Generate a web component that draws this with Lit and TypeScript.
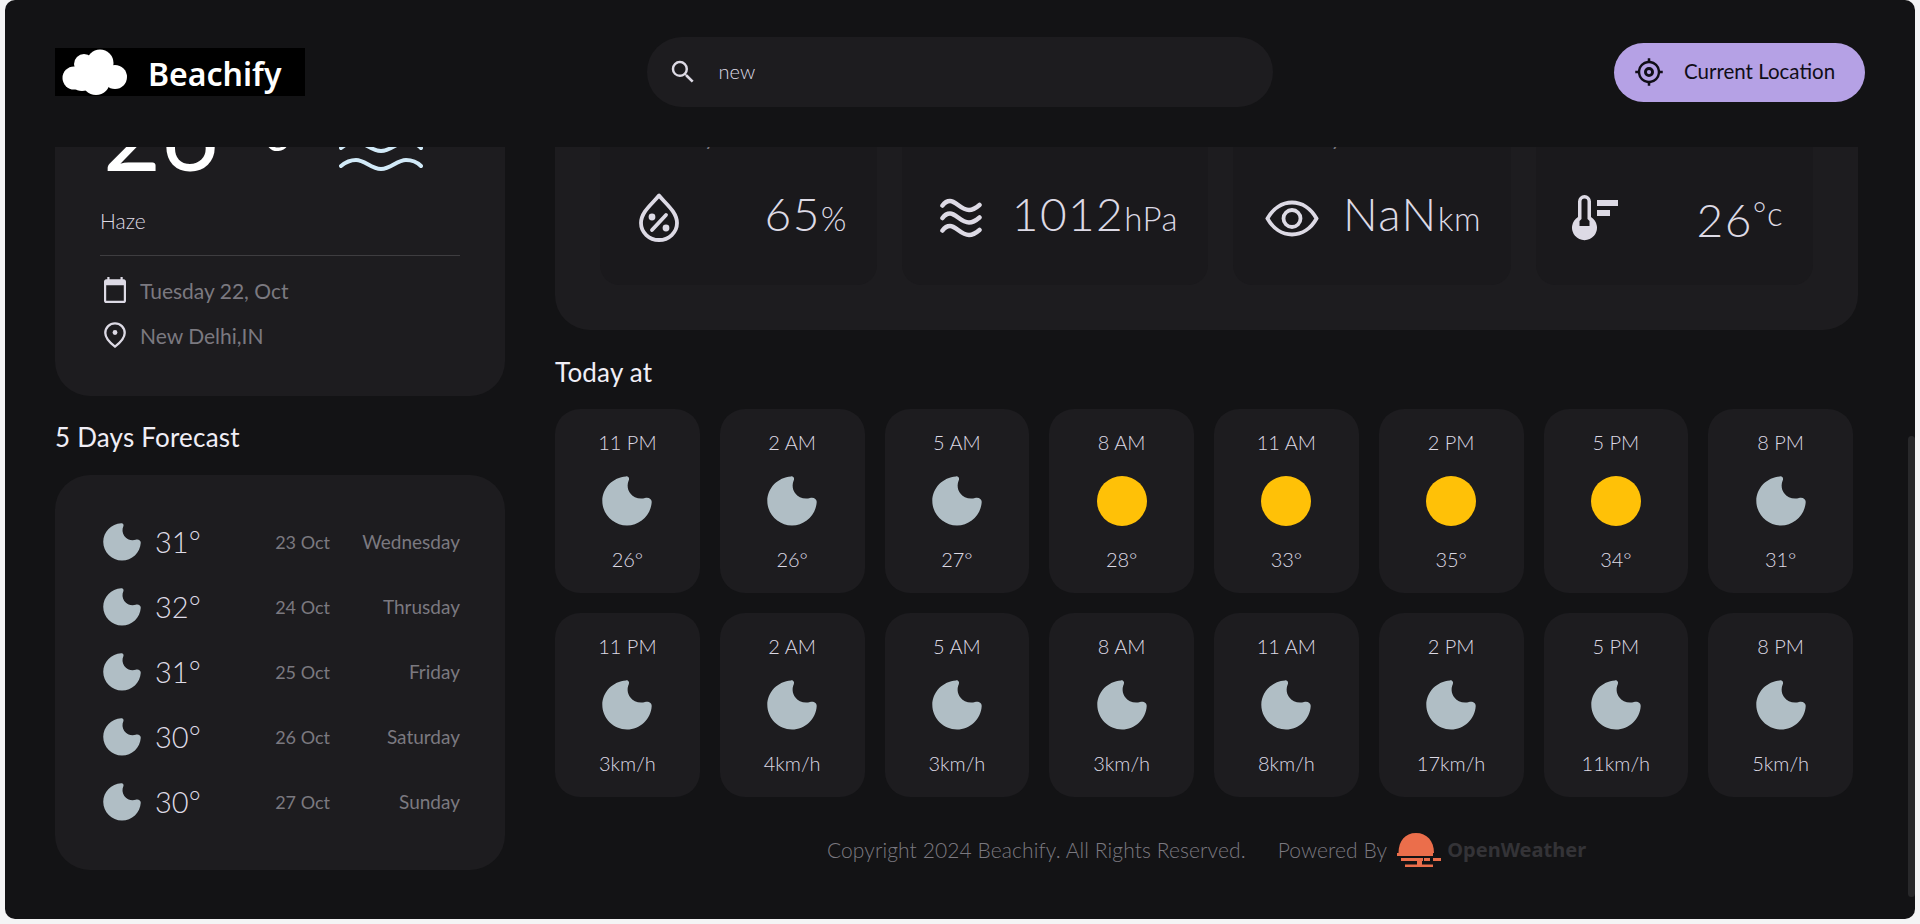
import { LitElement, html, css, svg } from "lit";
import { customElement } from "lit/decorators.js";

const moonIcon = (size: number) => html`<svg class="wx" width=${size} height=${size} viewBox="0 0 50 50" aria-hidden="true"><path fill="#b0bec5" d="M24 .4C26 0 27.8 2 26.8 4.2 25 7.8 25.2 13 28 17c3.4 4.9 9.8 6.6 15 5 3.6-1.1 6.9 1 6.7 4C49 39 38 49.5 25 49.5 11.5 49.5.3 38.3.3 24.8.3 11.8 11 1.2 24 .4z"/></svg>`;
const sunIcon = (size: number) => html`<svg class="wx" width=${size} height=${size} viewBox="0 0 50 50" aria-hidden="true"><circle cx="25" cy="25" r="25" fill="#ffc107"/></svg>`;

const forecast = [
  ["31", "23 Oct", "Wednesday"],
  ["32", "24 Oct", "Thrusday"],
  ["31", "25 Oct", "Friday"],
  ["30", "26 Oct", "Saturday"],
  ["30", "27 Oct", "Sunday"],
];
const times = ["11 PM", "2 AM", "5 AM", "8 AM", "11 AM", "2 PM", "5 PM", "8 PM"];
const temps = [["26°", 0], ["26°", 0], ["27°", 0], ["28°", 1], ["33°", 1], ["35°", 1], ["34°", 1], ["31°", 0]] as [string, number][];
const winds = ["3km/h", "4km/h", "3km/h", "3km/h", "8km/h", "17km/h", "11km/h", "5km/h"];

const dropIcon = svg`<path d="M20 2.500C13 11 2 19 2 30a18 17 0 0 0 36 0C38 19 27 11 20 2.500z" fill="none" stroke="currentColor" stroke-width="3.800" stroke-linejoin="round"/><circle cx="13" cy="24" r="3.400" fill="currentColor"/><circle cx="27" cy="35" r="3.400" fill="currentColor"/><path d="M13 37 27 22" stroke="currentColor" stroke-width="3.800" stroke-linecap="round"/>`;
const waveRow = (dy: number) => svg`<path transform="translate(0 ${dy})" d="M2.500 7.500C5 4 7 3 10 3 16 3 21 12 29 12 33 12 36 10 39.500 7"/>`;
const wavesIcon = svg`<g fill="none" stroke="currentColor" stroke-width="4.500" stroke-linecap="round">${waveRow(0)}${waveRow(12.5)}${waveRow(25)}</g>`;
const eyeIcon = svg`<path d="M2.500 18.500C8 8.500 17 2.500 27 2.500S46 8.500 51.500 18.500C46 28.500 37 34.500 27 34.500S8 28.500 2.500 18.500z" fill="none" stroke="currentColor" stroke-width="3.800"/><circle cx="27" cy="18.500" r="8.500" fill="none" stroke="currentColor" stroke-width="3.800"/>`;
const thermoIcon = svg`<path fill-rule="evenodd" fill="currentColor" d="M6 22V6.500a6.500 6.500 0 0 1 13 0V22a12.500 12.500 0 1 1-13 0zM9.500 6.500V24L7.500 26v5h10v-5L15.500 24V6.500a3 3 0 0 0-6 0z"/><path d="M25 5h21v6H25zM25 15h13v6H25z" fill="currentColor"/>`;

const highlights = [
  { label: "Humidity", icon: dropIcon, vb: "0 0 40 50", w: 40, h: 50, value: "65", unit: "%" },
  { label: "Pressure", icon: wavesIcon, vb: "0 0 42 40", w: 42, h: 40, value: "1012", unit: "hPa" },
  { label: "Visibility", icon: eyeIcon, vb: "0 0 54 37", w: 54, h: 37, value: "NaN", unit: "km" },
  { label: "Feels Like", icon: thermoIcon, vb: "0 0 46 46", w: 46, h: 46, value: "26", unit: "°c", sup: true },
];

@customElement("app-root")
export class AppRoot extends LitElement {
  static styles = css`
    :host {
      display: block;
      width: 1920px;
      height: 924px;
      background: #f4f4f5;
      overflow: hidden;
      font-family: "Lato", "Noto Sans", sans-serif;
      color: #dddae5;
    }
    * { box-sizing: border-box; }
    .panel {
      position: relative;
      width: 1910px;
      height: 919px;
      margin: 0 5px;
      background: #131315;
      border-radius: 10px;
      overflow: hidden;
      display: flex;
      flex-direction: column;
    }
    .header {
      flex: none;
      height: 147px;
      padding: 0 50px 3px;
      display: flex;
      align-items: center;
      justify-content: space-between;
    }
    .logo {
      width: 250px;
      height: 48px;
      background: #000;
      display: flex;
      align-items: center;
      padding-left: 7px;
      gap: 21px;
      color: #fff;
      font-family: "Noto Sans", sans-serif;
      font-weight: 600;
      font-size: 32px;
    }
    .logo span { margin-top: 2px; }
    .search {
      width: 626px;
      height: 70px;
      border-radius: 35px;
      background: #1d1c1f;
      display: flex;
      align-items: center;
      padding-left: 21px;
      gap: 21px;
      font-size: 20px;
      font-weight: 300;
      color: #dddae5;
    }
    .search svg { fill: #dddae5; }
    .search span, .locate span { margin-top: -2px; }
    .locate {
      width: 251px;
      height: 59px;
      border-radius: 30px;
      background: #b5a1e5;
      color: #100e17;
      display: flex;
      align-items: center;
      padding-left: 20px;
      gap: 20px;
      font-size: 20.500px;
      font-weight: 400;
    }
    .locate svg { fill: #100e17; }
    .body {
      flex: 1;
      min-height: 0;
      overflow: hidden;
    }
    .content {
      margin-top: -120px;
      padding: 0 57px 0 50px;
      display: grid;
      grid-template-columns: 450px 1fr;
      column-gap: 50px;
    }
    .card {
      background: #1d1c1f;
      border-radius: 35px;
    }
    .now {
      height: 369px;
      padding: 55px 45px 0;
    }
    .now-top {
      height: 100px;
      display: flex;
      justify-content: space-between;
      color: #fff;
      font-size: 100px;
      line-height: 100px;
      font-weight: 400;
    }
    .now-temp { margin-left: 3px; }
    .now-top sup {
      font-size: 50px;
      line-height: 0;
      vertical-align: 20px;
      margin-left: 24px;
    }
    .haze-icon { flex: none; margin-right: 37px; color: #d2eaf8; }
    .haze {
      margin-top: 26px;
      font-size: 21px;
      line-height: 26px;
      font-weight: 300;
    }
    .divider {
      margin-top: 21px;
      height: 1px;
      background: #3e3d40;
    }
    .meta {
      display: flex;
      align-items: center;
      height: 30px;
      gap: 14px;
      font-size: 21px;
      color: #7b7980;
      margin-top: 19px;
    }
    .meta + .meta { margin-top: 15px; }
    .meta svg { margin-left: 4px; flex: none; color: #dddae5; }
    h2 {
      margin: 0;
      font-size: 26px;
      line-height: 30px;
      font-weight: 400;
      letter-spacing: 0.200px;
      color: #f0eef6;
    }
    .fc-title { margin-top: 26px; }
    .fc {
      margin-top: 23px;
      padding: 34px 45px 36px;
    }
    .fc-row {
      height: 65px;
      display: grid;
      grid-template-columns: 55px 1fr auto 130px;
      align-items: center;
    }
    .fc-row .wx { margin-left: 3px; }
    .fc-temp { font-size: 29px; font-weight: 300; }
    .fc-date { font-size: 18px; color: #7b7980; }
    .fc-day { font-size: 19px; color: #7b7980; text-align: right; }
    .hl {
      height: 303px;
      padding: 83px 45px 0;
    }
    .hl-grid {
      display: grid;
      grid-template-columns: 277px 306px 278px 277px;
      column-gap: 25px;
    }
    .hl-card {
      height: 175px;
      background: #1a191c;
      border-radius: 20px;
      padding: 14px 30px 0;
    }
    .hl-label {
      font-size: 21px;
      line-height: 26px;
      color: #7b7980;
    }
    .hl-row {
      margin-top: 38px;
      height: 60px;
      display: flex;
      align-items: center;
      justify-content: space-between;
    }
    .hl-icon {
      width: 58px;
      height: 60px;
      display: flex;
      align-items: center;
      justify-content: center;
    }
    .hl-value {
      font-size: 46px;
      line-height: 56px;
      margin-bottom: 4px;
      font-weight: 300;
      letter-spacing: 1.400px;
      white-space: nowrap;
    }
    .hl-value span { font-size: 33px; letter-spacing: 0.500px; }
    .hl-value span.sup { vertical-align: 11px; }
    .today { margin-top: 27px; }
    .hours {
      margin-top: 22px;
      display: grid;
      grid-template-columns: repeat(8, 1fr);
      gap: 20px;
      width: 1298px;
    }
    .hour {
      height: 184px;
      padding: 20px 0 21px;
      border-radius: 25px;
      background: #1d1c1f;
      display: flex;
      flex-direction: column;
      align-items: center;
      gap: 20px;
      font-size: 20px;
      line-height: 26px;
      font-weight: 300;
    }
    .hour .wx { margin-top: 1px; }
    .footer {
      margin-top: 35px;
      display: flex;
      align-items: center;
      justify-content: center;
      font-size: 21px;
      line-height: 36px;
      font-weight: 300;
      letter-spacing: 0.100px;
      color: #7b7980;
    }
    .powered { margin-left: 32px; margin-right: 10px; }
    .ow {
      margin-left: 5px;
      font-family: "Noto Sans", sans-serif;
      font-weight: 700;
      font-size: 20px;
      letter-spacing: 0;
      color: #343337;
    }
    .scrollbar {
      position: absolute;
      right: 0;
      top: 436px;
      width: 7px;
      height: 461px;
      border-radius: 4px;
      background: #28282a;
    }
  `;

  render() {
    return html`
      <div class="panel">
        <header class="header">
          <div class="logo">
            <svg width="65" height="46" viewBox="0 0 65 46" fill="#fff" aria-hidden="true">
              <circle cx="12" cy="29" r="11.500"/><circle cx="22" cy="15" r="10"/><circle cx="38" cy="14" r="13.500"/><circle cx="53" cy="28" r="12"/><circle cx="34" cy="32" r="14"/><circle cx="20" cy="30" r="12"/>
            </svg>
            <span>Beachify</span>
          </div>
          <div class="search">
            <svg width="30" height="30" viewBox="0 0 24 24" aria-hidden="true"><path d="M15.500 14h-.79l-.28-.27A6.471 6.471 0 0 0 16 9.500 6.500 6.500 0 1 0 9.500 16c1.610 0 3.090-.59 4.230-1.570l.27.28v.79l5 4.990L20.490 19l-4.990-5zm-6 0C7.010 14 5 11.990 5 9.500S7.010 5 9.500 5 14 7.010 14 9.500 11.990 14 9.500 14z"/></svg>
            <span>new</span>
          </div>
          <div class="locate">
            <svg width="30" height="30" viewBox="0 0 24 24" aria-hidden="true"><path d="M12 8a4 4 0 1 0 0 8 4 4 0 0 0 0-8zm0 2.300a1.700 1.700 0 1 1 0 3.400 1.700 1.700 0 0 1 0-3.400z"/><path d="M20.940 11A8.994 8.994 0 0 0 13 3.060V1h-2v2.060A8.994 8.994 0 0 0 3.060 11H1v2h2.060A8.994 8.994 0 0 0 11 20.940V23h2v-2.060A8.994 8.994 0 0 0 20.940 13H23v-2h-2.060zM12 19c-3.870 0-7-3.130-7-7s3.130-7 7-7 7 3.130 7 7-3.130 7-7 7z"/></svg>
            <span>Current Location</span>
          </div>
        </header>
        <div class="body">
          <div class="content">
            <div class="left">
              <section class="card now">
                <div class="now-top">
                  <span class="now-temp">26<sup>°c</sup></span>
                  <svg class="haze-icon" width="84" height="100" viewBox="0 82 84 100" fill="none" stroke="currentColor" stroke-width="4" stroke-linecap="round" aria-hidden="true">
                    <path d="M2 130C8 125 13 124 17 124 26 124 32 133 42 133 52 133 58 124 67 124 72 124 77 125 82 130"/>
                    <path d="M2 148C8 143 13 142 17 142 26 142 32 151 42 151 52 151 58 142 67 142 72 142 77 143 82 148"/>
                    <path d="M2 166C8 161 13 160 17 160 26 160 32 169 42 169 52 169 58 160 67 160 72 160 77 161 82 166"/>
                  </svg>
                </div>
                <div class="haze">Haze</div>
                <div class="divider"></div>
                <div class="meta">
                  <svg width="22" height="26" viewBox="2 1 20 22" preserveAspectRatio="none" fill="currentColor" aria-hidden="true"><path d="M20 3h-1V1h-2v2H7V1H5v2H4c-1.100 0-2 .9-2 2v16c0 1.100.9 2 2 2h16c1.100 0 2-.9 2-2V5c0-1.100-.9-2-2-2zm0 18H4V8h16v13z"/></svg>
                  <span>Tuesday 22, Oct</span>
                </div>
                <div class="meta">
                  <svg width="22" height="26" viewBox="0 0 22 26" aria-hidden="true"><path d="M11 1.300C5.600 1.300 1.300 5.600 1.300 11c0 5.300 4.800 9.900 9.700 13.600 4.900-3.700 9.700-8.300 9.700-13.600 0-5.400-4.300-9.700-9.700-9.700z" fill="none" stroke="currentColor" stroke-width="2.300"/><circle cx="11" cy="10.500" r="2.400" fill="currentColor"/></svg>
                  <span>New Delhi,IN</span>
                </div>
              </section>
              <h2 class="fc-title">5 Days Forecast</h2>
              <section class="card fc">
                ${forecast.map(
                  ([t, d, w]) => html`<div class="fc-row">
                    ${moonIcon(38)}
                    <span class="fc-temp">${t}°</span>
                    <span class="fc-date">${d}</span>
                    <span class="fc-day">${w}</span>
                  </div>`
                )}
              </section>
            </div>
            <div class="main">
              <section class="card hl">
                <div class="hl-grid">
                  ${highlights.map(
                    (h) => html`<div class="hl-card">
                      <div class="hl-label">${h.label}</div>
                      <div class="hl-row">
                        <div class="hl-icon">
                          <svg width=${h.w} height=${h.h} viewBox=${h.vb} aria-hidden="true">${h.icon}</svg>
                        </div>
                        <div class="hl-value">${h.value}<span class=${h.sup ? "sup" : ""}>${h.unit}</span></div>
                      </div>
                    </div>`
                  )}
                </div>
              </section>
              <h2 class="today">Today at</h2>
              <div class="hours">
                ${times.map(
                  (t, i) => html`<div class="hour"><span>${t}</span>${temps[i][1] ? sunIcon(50) : moonIcon(50)}<span>${temps[i][0]}</span></div>`
                )}
                ${times.map(
                  (t, i) => html`<div class="hour"><span>${t}</span>${moonIcon(50)}<span>${winds[i]}</span></div>`
                )}
              </div>
              <footer class="footer">
                <span>Copyright 2024 Beachify. All Rights Reserved.</span>
                <span class="powered">Powered By</span>
                <svg width="45" height="36" viewBox="0 0 45 36" fill="#eb6e4b" aria-hidden="true">
                  <path d="M1.500 21C1.500 9 8 1 19 1s18 8 18 20z"/>
                  <path d="M0 21h36v3H0zM4 26h22v3H4zM27 26h6v3h-6zM36 26h8v3h-8zM20 29h5v4h-5zM8 32.500h28V35H8z"/>
                </svg>
                <span class="ow">OpenWeather</span>
              </footer>
            </div>
          </div>
        </div>
        <div class="scrollbar"></div>
      </div>
    `;
  }
}
